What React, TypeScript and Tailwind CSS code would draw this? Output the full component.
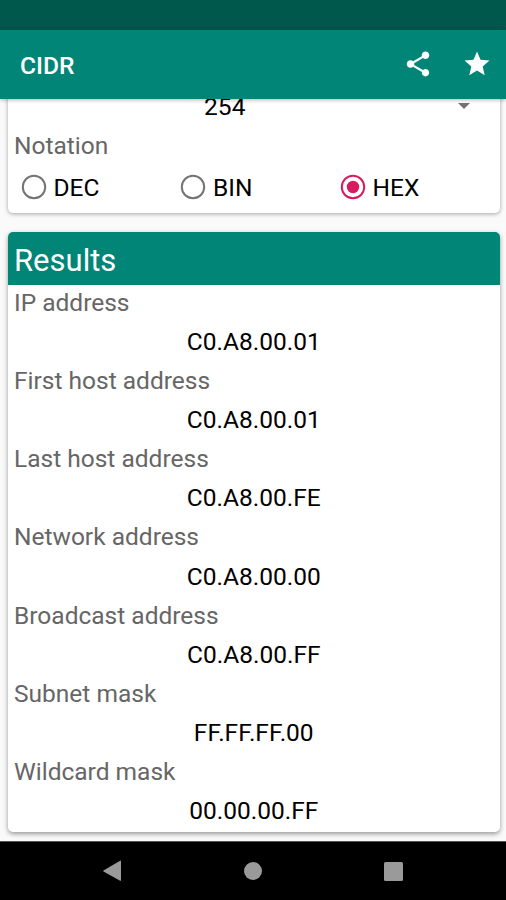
import { MdShare, MdStar } from "react-icons/md";

interface ResultRow {
  label: string;
  value: string;
}

const notations = ["DEC", "BIN", "HEX"];

const results: ResultRow[] = [
  { label: "IP address", value: "C0.A8.00.01" },
  { label: "First host address", value: "C0.A8.00.01" },
  { label: "Last host address", value: "C0.A8.00.FE" },
  { label: "Network address", value: "C0.A8.00.00" },
  { label: "Broadcast address", value: "C0.A8.00.FF" },
  { label: "Subnet mask", value: "FF.FF.FF.00" },
  { label: "Wildcard mask", value: "00.00.00.FF" },
];

function RadioIcon({ checked }: { checked: boolean }) {
  return (
    <svg
      viewBox="0 0 26 26"
      className={checked ? "mb-0.5 size-[26px] text-[#d81b60]" : "mb-0.5 size-[26px] text-[#737373]"}
    >
      <circle cx="13" cy="13" r="11.2" fill="none" stroke="currentColor" strokeWidth="2" />
      {checked && <circle cx="13" cy="13" r="6.2" fill="currentColor" />}
    </svg>
  );
}

function AppBar() {
  return (
    <header className="relative z-10 flex h-[69px] shrink-0 items-center bg-[#008577] pt-[3px] pr-3.5 pl-5 text-white shadow-[0_1px_4px_rgba(0,0,0,0.3)]">
      <h1 className="flex-1 text-[24.6px] font-medium">CIDR</h1>
      <MdShare className="mr-[29px] mb-[4px] size-[30px]" />
      <MdStar className="mb-[4px] size-[30px]" />
    </header>
  );
}

function NotationCard() {
  return (
    <section className="flex h-[134px] shrink-0 flex-col justify-end rounded-[5px] bg-white pb-1 shadow-[0_1px_4px_rgba(0,0,0,0.35)]">
      {/* Host count spinner, partly scrolled under the app bar */}
      <div className="flex h-[38px] items-center pr-[30px]">
        <span className="flex-1 pr-4 text-center text-black">254</span>
        <svg viewBox="0 0 12 6" className="-mt-0.5 h-1.5 w-3 fill-[#737373]">
          <path d="M0 0h12L6 6z" />
        </svg>
      </div>
      <div className="h-10 pl-[6.5px] leading-10 text-[#666]">Notation</div>
      <div className="flex h-[43px] items-center pl-[13px] text-black">
        {notations.map((name) => (
          <label key={name} className="flex w-[159.5px] items-center gap-[7px]">
            <RadioIcon checked={name === "HEX"} />
            <span className="pt-px">{name}</span>
          </label>
        ))}
      </div>
    </section>
  );
}

function ResultsCard() {
  return (
    <section className="mt-[19px] h-[600px] shrink-0 rounded-[5px] bg-white shadow-[0_2px_5px_rgba(0,0,0,0.4)]">
      <h2 className="h-[53.2px] rounded-t-[5px] bg-[#008577] pl-[6.5px] text-[31px] leading-[57px] text-white">
        Results
      </h2>
      {results.map((row) => (
        <div key={row.label}>
          <div className="h-[36.1px] pl-[6.5px] leading-9 text-[#666]">{row.label}</div>
          <div className="h-[42px] text-center leading-[42px] text-black">{row.value}</div>
        </div>
      ))}
    </section>
  );
}

function NavigationBar() {
  return (
    <nav className="relative z-10 flex h-[59px] shrink-0 items-center justify-between border-t border-[#555] bg-black pr-[103px] pl-[102px]">
      <svg viewBox="0 0 20 22" className="h-[22px] w-5 fill-[#9a9a9a]">
        <path d="M19 1.2v19q0 1-.9.5L1.5 11.4q-.8-.5 0-1L18.1.8q.9-.5.9.4z" />
      </svg>
      <div className="size-[18px] rounded-full bg-[#9a9a9a]" />
      <div className="size-[19px] rounded-[1.5px] bg-[#9a9a9a]" />
    </nav>
  );
}

export default function App() {
  return (
    <div className="flex h-[900px] w-[506px] flex-col overflow-hidden bg-[#fafafa] font-[Roboto,sans-serif] text-[24.5px]">
      <div className="h-[30px] shrink-0 bg-[#00574b]" />
      <AppBar />
      <main className="flex min-h-0 flex-1 flex-col justify-end overflow-hidden pr-1.5 pb-[9px] pl-[7.5px]">
        <NotationCard />
        <ResultsCard />
      </main>
      <NavigationBar />
    </div>
  );
}
